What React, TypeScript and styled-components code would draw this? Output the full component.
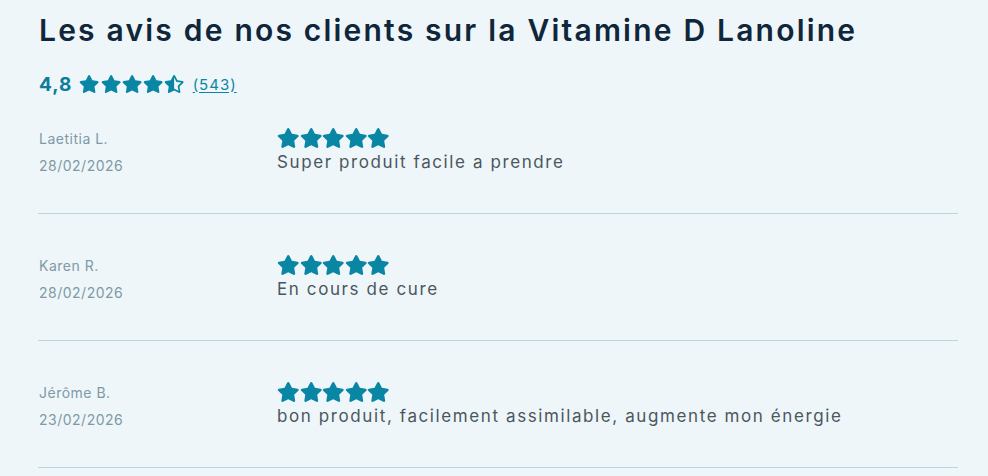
import React from "react";
import styled, { createGlobalStyle } from "styled-components";

const GlobalStyle = createGlobalStyle`
  html, body {
    margin: 0;
    padding: 0;
    background: #eef6f9;
  }
  body {
    font-family: Inter, "Noto Sans", "DejaVu Sans", sans-serif;
  }
`;

const Page = styled.section`
  width: 920px;
  margin-left: 38px;
  background: #eef6f9;
`;

const Title = styled.h2`
  margin: 0;
  padding-top: 12px;
  font-size: 30px;
  line-height: 36px;
  font-weight: 600;
  letter-spacing: 2.2px;
  color: #10263a;
  padding-left: 1px;
`;

const Summary = styled.div`
  display: flex;
  align-items: center;
  height: 24px;
  margin-top: 24px;
  padding-left: 1px;
`;

const Score = styled.span`
  font-size: 19px;
  font-weight: 700;
  letter-spacing: 1px;
  color: #0b7c9a;
  margin-right: 7px;
`;

const Stars = styled.div<{ $size: number; $gap: number }>`
  display: flex;
  gap: ${(p) => p.$gap}px;
  color: #0a86a5;
  svg {
    height: ${(p) => p.$size}px;
    width: ${(p) => (p.$size * 576) / 512}px;
    display: block;
  }
`;

const ReviewStars = styled(Stars)`
  margin-bottom: 3px;
`;

const Count = styled.a`
  margin-left: 8px;
  font-size: 15px;
  letter-spacing: 1px;
  color: #0a86a5;
  text-decoration: underline;
  text-underline-offset: 2px;
`;

const List = styled.div`
  margin-top: 32px;
`;

const Row = styled.article`
  display: grid;
  grid-template-columns: 239px 1fr;
  padding: 41px 0 37px;
  border-bottom: 1px solid #b9d7e3;
  &:first-child {
    padding-top: 0;
  }
`;

const Author = styled.div`
  display: flex;
  flex-direction: column;
  gap: 7px;
  padding: 1px 0 0 1px;
`;

const Meta = styled.span`
  font-size: 14px;
  line-height: 20px;
  letter-spacing: 0.5px;
  color: #7f99a6;
`;

const Body = styled.div`
  display: flex;
  flex-direction: column;
`;

const Comment = styled.p`
  margin: 0;
  font-size: 17px;
  line-height: 22px;
  letter-spacing: 1.6px;
  color: #4b5660;
`;

const StarPath =
  "M259.3 17.8L194 150.2 47.9 171.5c-26.2 3.8-36.7 36.1-17.7 54.6l105.7 103-25 145.5c-4.5 26.3 23.2 46 46.4 33.7L288 439.6l130.7 68.7c23.2 12.2 50.9-7.4 46.4-33.7l-25-145.5 105.7-103c19-18.5 8.5-50.8-17.7-54.6L382 150.2 316.7 17.8c-11.7-23.6-45.6-23.9-57.4 0z";

const HalfPath =
  "M508.55 171.51L362.18 150.2 296.77 17.81C290.89 5.98 279.42 0 267.95 0c-11.4 0-22.79 5.9-28.69 17.81l-65.43 132.38-146.38 21.29c-26.25 3.8-36.77 36.09-17.74 54.59l105.89 103-25.06 145.48C86.98 495.33 103.57 512 122.15 512c4.93 0 10-1.17 14.87-3.75l130.95-68.68 130.94 68.7c4.86 2.55 9.92 3.71 14.83 3.71 18.6 0 35.22-16.61 31.66-37.4l-25.03-145.49 105.91-102.98c19.04-18.5 8.52-50.8-17.73-54.59zm-121.74 123.2l-18.12 17.62 4.28 24.88 19.52 113.45-102.13-53.59-22.38-11.74.03-317.19 51.03 103.29 11.18 22.63 25.01 3.64 114.23 16.63-82.65 80.38z";

const Star = () => (
  <svg viewBox="0 0 576 512" fill="currentColor" aria-hidden="true">
    <path d={StarPath} />
  </svg>
);

const HalfStar = () => (
  <svg viewBox="-20 0 576 512" fill="currentColor" aria-hidden="true">
    <path d={HalfPath} />
  </svg>
);

const reviews = [
  { name: "Laetitia L.", date: "28/02/2026", text: "Super produit facile a prendre" },
  { name: "Karen R.", date: "28/02/2026", text: "En cours de cure" },
  {
    name: "Jérôme B.",
    date: "23/02/2026",
    text: "bon produit, facilement assimilable, augmente mon énergie",
  },
];

export default function App() {
  return (
    <>
      <GlobalStyle />
      <Page>
        <Title>Les avis de nos clients sur la Vitamine D Lanoline</Title>
        <Summary>
          <Score>4,8</Score>
          <Stars $size={18} $gap={1}>
            <Star />
            <Star />
            <Star />
            <Star />
            <HalfStar />
          </Stars>
          <Count href="#">(543)</Count>
        </Summary>
        <List>
          {reviews.map((r) => (
            <Row key={r.name}>
              <Author>
                <Meta>{r.name}</Meta>
                <Meta>{r.date}</Meta>
              </Author>
              <Body>
                <ReviewStars $size={20} $gap={0}>
                  <Star />
                  <Star />
                  <Star />
                  <Star />
                  <Star />
                </ReviewStars>
                <Comment>{r.text}</Comment>
              </Body>
            </Row>
          ))}
        </List>
      </Page>
    </>
  );
}
